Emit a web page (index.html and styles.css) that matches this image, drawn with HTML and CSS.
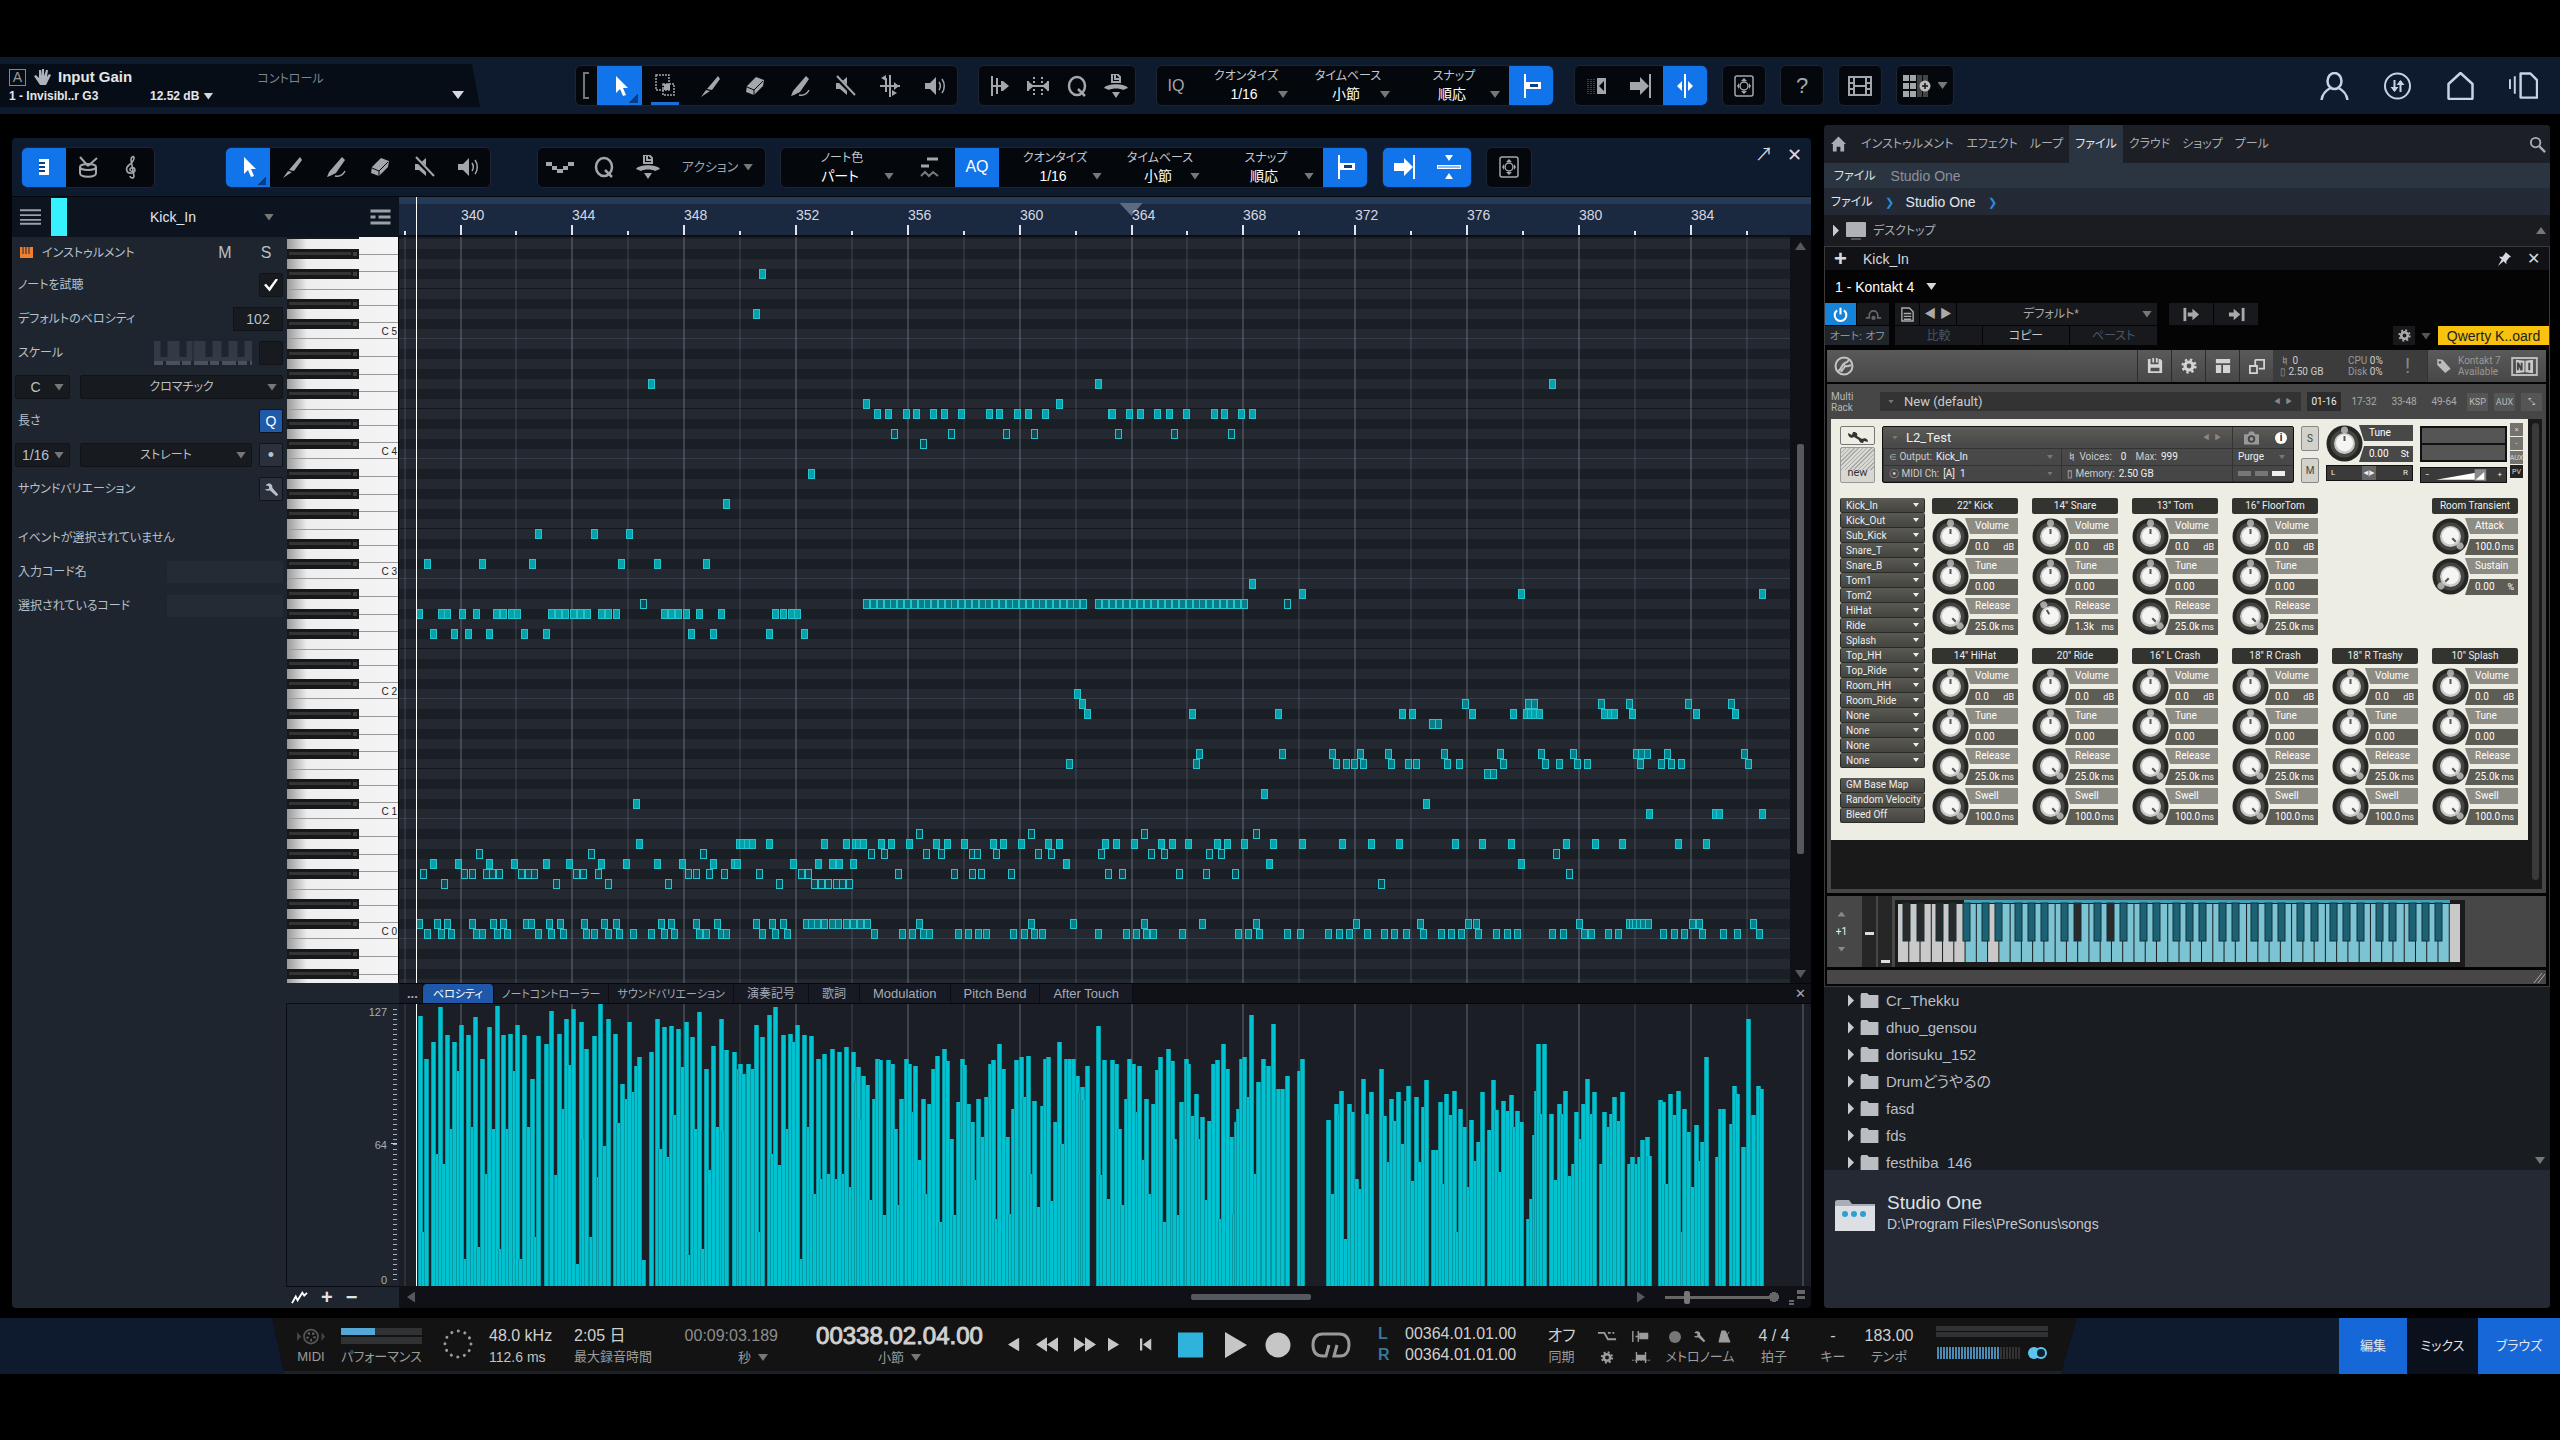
FILE: index.html
```html
<!DOCTYPE html>
<html lang="ja">
<head>
<meta charset="utf-8">
<title>Studio One</title>
<link rel="stylesheet" href="styles.css">
</head>
<body>
<svg class="sprite" aria-hidden="true">
  <symbol id="arrow" viewBox="0 0 24 24"><path d="M8 2v17l4-4 3 7 3-1-3-7h5z" fill="#fff"/></symbol>
  <symbol id="range" viewBox="0 0 24 24"><path d="M3 1h13v15H3z" fill="none" stroke="currentColor" stroke-width="1.5" stroke-dasharray="2 1"/><path d="M10 10h11v11H10z" fill="none" stroke="currentColor" stroke-width="1.5" stroke-dasharray="2 1"/><path d="M11 10h6v6h-6z" fill="currentColor"/></symbol>
  <symbol id="pencil" viewBox="0 0 24 24"><path d="M20 2l2 3-8 11-5-1zM8 16l4 1-9 6z" fill="currentColor"/></symbol>
  <symbol id="eraser" viewBox="0 0 24 24"><path d="M13 3l8 3-1 6-9 9-8-3 1-6z" fill="currentColor"/><path d="M4 13l7 3 9-9M11 16v5" stroke="#05080d" fill="none"/></symbol>
  <symbol id="brush" viewBox="0 0 24 24"><path d="M18 2l3 3-9 13-6 3-3 1 2-5z" fill="currentColor"/><path d="M11 21c5 1 8-1 10-5" stroke="currentColor" stroke-width="1.5" fill="none"/></symbol>
  <symbol id="mute" viewBox="0 0 24 24"><path d="M3 9h4l7-6v18l-7-6H3z" fill="currentColor"/><path d="M3 3l18 18" stroke="#05080d" stroke-width="4"/><path d="M4 2l18 19" stroke="currentColor" stroke-width="2"/></symbol>
  <symbol id="sound" viewBox="0 0 24 24"><path d="M2 9h5l6-6v18l-6-6H2z" fill="currentColor"/><path d="M16 8c2 3 2 5 0 8M19 5c3 4 3 10 0 14" stroke="currentColor" stroke-width="1.5" fill="none"/></symbol>
  <symbol id="bend" viewBox="0 0 24 24"><path d="M12 1v22M2 12h20M8 4v14" stroke="currentColor" stroke-width="2"/><path d="M8 1v6L3 4zM14 22v-6l5 3zM16 8l5 4-5 4z" fill="currentColor"/></symbol>
  <symbol id="trans" viewBox="0 0 24 24"><path d="M5 2v20M10 4v16M15 7v10M5 12h12" stroke="currentColor" stroke-width="2"/><path d="M16 7l6 5-6 5z" fill="currentColor"/></symbol>
  <symbol id="stretch" viewBox="0 0 24 24"><path d="M2 7v10M22 7v10M2 12h20" stroke="currentColor" stroke-width="2"/><path d="M8 3v18M16 3v18" stroke="currentColor" stroke-width="2" stroke-dasharray="2 2"/><path d="M3 8l5 4-5 4zM21 8l-5 4 5 4z" fill="currentColor"/></symbol>
  <symbol id="quant" viewBox="0 0 24 24"><ellipse cx="12" cy="12" rx="8" ry="9" fill="none" stroke="currentColor" stroke-width="2.5"/><path d="M13 15l7 7" stroke="currentColor" stroke-width="2.5"/></symbol>
  <symbol id="midiq" viewBox="0 0 24 24"><path d="M8 0h5l3 3v5H8zM11 0v5h4" fill="none" stroke="currentColor" stroke-width="2"/><path d="M0 14c3-5 21-5 24 0l-5 2c-3-2-11-2-14 0zM8 18h8l-4 6z" fill="currentColor"/></symbol>
  <symbol id="snap" viewBox="0 0 24 24"><path d="M6 0v24" stroke="#fff" stroke-width="2"/><path d="M7 8h15v7H7z" fill="#fff"/><path d="M11 10h8v3h-8z" fill="#0c3f8a"/></symbol>
  <symbol id="dots" viewBox="0 0 24 24"><path d="M3 5v15M6 5v15M9 5v15" stroke="#777" stroke-dasharray="1 1"/><path d="M12 4h9v16h-9zM19 7l-5 5 5 5z" fill="currentColor" fill-rule="evenodd"/></symbol>
  <symbol id="toend" viewBox="0 0 24 24"><path d="M1 8h10V3l9 9-9 9v-5H1z" fill="currentColor"/><path d="M21 0v24" stroke="currentColor" stroke-width="2"/></symbol>
  <symbol id="center" viewBox="0 0 24 24"><path d="M12 0v24" stroke="#fff" stroke-width="2"/><path d="M9 7v10l-5-5zM15 7v10l5-5z" fill="#fff"/></symbol>
  <symbol id="split" viewBox="0 0 24 24"><path d="M0 12h24" stroke="#fff" stroke-width="4"/><path d="M1 12h22" stroke="#1174ea"/><path d="M8 0h8l-4 6zM8 24h8l-4-6z" fill="#fff"/></symbol>
  <symbol id="focus" viewBox="0 0 24 24"><rect x="3" y="2" width="18" height="20" rx="2" fill="none" stroke="currentColor" stroke-width="1.5"/><circle cx="12" cy="12" r="4" fill="none" stroke="currentColor" stroke-width="1.5"/><path d="M9 7l3-3 3 3zM9 17l3 3 3-3zM7 9l-2 3 2 3zM17 9l2 3-2 3z" fill="currentColor"/></symbol>
  <symbol id="film" viewBox="0 0 24 24"><path d="M1 3h22v18H1zM6 3v18M18 3v18M6 12h12M1 9h5M1 15h5M18 9h5M18 15h5" fill="none" stroke="currentColor" stroke-width="2"/></symbol>
  <symbol id="gridplus" viewBox="0 0 28 24"><path d="M0 1h6v6H0zM7 1h6v6H7zM0 9h6v6H0zM7 9h6v6H7zM0 17h6v6H0zM7 17h6v6H7z" fill="currentColor"/><path d="M14 1h5v22h-5zM20 1h5v22h-5z" fill="#444"/><circle cx="22" cy="12" r="5.5" fill="#bbb"/><path d="M22 9v6M19 12h6" stroke="#111" stroke-width="1.5"/></symbol>
  <symbol id="user" viewBox="0 0 28 28"><ellipse cx="14" cy="9" rx="7" ry="8" fill="none" stroke="currentColor" stroke-width="2.5"/><path d="M1 28c1-7 5-10 9-12M27 28c-1-7-5-10-9-12" fill="none" stroke="currentColor" stroke-width="2.5"/></symbol>
  <symbol id="sync" viewBox="0 0 28 28"><circle cx="14" cy="14" r="12.5" fill="none" stroke="currentColor" stroke-width="2"/><path d="M11 8v11M17 20V9" stroke="currentColor" stroke-width="2"/><path d="M7 15h8l-4 5zM13 13h8l-4-5z" fill="currentColor"/></symbol>
  <symbol id="house" viewBox="0 0 28 28"><path d="M2 12L14 1l12 11v14q0 1-1 1H3q-1 0-1-1z" fill="none" stroke="currentColor" stroke-width="2.5" stroke-linejoin="round"/></symbol>
  <symbol id="pages" viewBox="0 0 30 28"><path d="M12 1h10l7 7v18H12z" fill="none" stroke="currentColor" stroke-width="2.5" stroke-linejoin="round"/><path d="M1 7v10M6 4v18" stroke="currentColor" stroke-width="2"/></symbol>
  <symbol id="hand" viewBox="0 0 18 18"><path d="M1 8l2-1 3 3V2h2v6l1-7h2v7l2-6h2l-1 7 2-3 2 1-5 10H7z" fill="#aeb4bb"/></symbol>
  <symbol id="keys" viewBox="0 0 24 24"><path d="M7 4h10v16H7z" fill="#fff"/><path d="M7 8h6M7 12h6M7 16h6" stroke="#0b3f87" stroke-width="2"/></symbol>
  <symbol id="drum" viewBox="0 0 24 24"><ellipse cx="12" cy="12" rx="8" ry="3" fill="none" stroke="currentColor" stroke-width="2"/><path d="M4 12v6c0 5 16 5 16 0v-6M4 2l8 9M21 3l-9 8" fill="none" stroke="currentColor" stroke-width="2"/></symbol>
  <symbol id="clef" viewBox="0 0 24 24"><path d="M13 16c-3 1-4-2-2-3 4-2 6 4 1 5-6 1-7-5-3-8 4-3 5-5 5-7 0-3-3-1-3 2l3 16c0 3-4 2-4 0" fill="none" stroke="currentColor" stroke-width="1.6"/></symbol>
  <symbol id="steps" viewBox="0 0 28 24"><path d="M0 7h6v4H0zM6 11h5v4H6zM11 14h6v4h-6zM17 11h5v4h-5zM22 7h6v4h-6z" fill="currentColor"/></symbol>
  <symbol id="notefx" viewBox="0 0 24 24"><path d="M10 4h11M4 11h8" stroke="currentColor" stroke-width="3"/><path d="M4 21l4-4 4 4 4-4 5 4" fill="none" stroke="#777" stroke-width="2"/></symbol>
  <symbol id="wrench" viewBox="0 0 18 18"><path d="M2 4c3-4 9-2 8 3l7 8-2 2-8-7c-2 1-5 0-6-1l5-1V5z" fill="currentColor"/></symbol>
  <symbol id="gear" viewBox="0 0 20 20"><circle cx="10" cy="10" r="5" fill="none" stroke="currentColor" stroke-width="4"/><circle cx="10" cy="10" r="8" fill="none" stroke="currentColor" stroke-width="3" stroke-dasharray="3 3.3"/></symbol>
  <symbol id="search" viewBox="0 0 18 18"><circle cx="7" cy="7" r="5" fill="none" stroke="currentColor" stroke-width="2"/><path d="M11 11l6 6" stroke="currentColor" stroke-width="2.5"/></symbol>
  <symbol id="homef" viewBox="0 0 16 16"><path d="M8 0l8 8h-2v8h-4v-5H6v5H2V8H0z" fill="currentColor"/></symbol>
  <symbol id="screen" viewBox="0 0 22 20"><rect x="1" y="1" width="20" height="15" rx="1" fill="#aeb2b6"/><path d="M6 18h10" stroke="#555" stroke-width="2"/></symbol>
  <symbol id="folder" viewBox="0 0 19 16"><path d="M0 2l1-2h6l2 2h10v14H0z" fill="#babdc2"/></symbol>
  <symbol id="pin" viewBox="0 0 16 16"><path d="M9 1l6 5-2 1-3 4v3l-3-3-6 5 4-7-3-3h4l3-4z" fill="currentColor"/></symbol>
  <symbol id="power" viewBox="0 0 18 18"><path d="M5 4a7 7 0 1 0 8 0M9 1v8" fill="none" stroke="#fff" stroke-width="2.5"/></symbol>
  <symbol id="bypass" viewBox="0 0 20 16"><path d="M1 12h4V9c0-7 10-7 10 0v3h4" fill="none" stroke="currentColor" stroke-width="2"/><circle cx="10" cy="12" r="2.5" fill="currentColor"/></symbol>
  <symbol id="doc" viewBox="0 0 14 16"><path d="M1 1h8l4 4v10H1zM3 7h8M3 10h8M3 13h8" fill="none" stroke="currentColor" stroke-width="1.5"/></symbol>
  <symbol id="inarr" viewBox="0 0 18 14"><path d="M2 0v14" stroke="currentColor" stroke-width="3"/><path d="M5 5h5V1l7 6-7 6V9H5z" fill="currentColor"/></symbol>
  <symbol id="outarr" viewBox="0 0 18 14"><path d="M16 0v14" stroke="currentColor" stroke-width="3"/><path d="M1 5h5V1l7 6-7 6V9H1z" fill="currentColor"/></symbol>
  <symbol id="klogo" viewBox="0 0 20 20"><circle cx="10" cy="10" r="8.5" fill="none" stroke="currentColor" stroke-width="2"/><path d="M4 15c3 0 3-6 7-8 3-1 3-2 4-3M7 16c2-4 3-3 4-6 2 1 4 0 6-1" stroke="currentColor" stroke-width="2" fill="none"/></symbol>
  <symbol id="disk" viewBox="0 0 18 18"><path d="M1 1h3v6h9V1h2l2 2v14H1zM6 0h2v5H6zM10 0h2v5h-2zM4 11v4h10v-4z" fill="currentColor" fill-rule="evenodd"/></symbol>
  <symbol id="panes" viewBox="0 0 18 18"><path d="M1 1h16v5H1zM1 8h6v9H1zM9 8h8v9H9z" fill="currentColor"/></symbol>
  <symbol id="popout" viewBox="0 0 18 18"><path d="M7 2h10v10h-6M1 9h8v8H1zM7 2v6" fill="none" stroke="currentColor" stroke-width="2"/></symbol>
  <symbol id="tag" viewBox="0 0 16 18"><path d="M1 1l6 1 9 10-6 5L1 8z" fill="currentColor"/><circle cx="4" cy="5" r="1.5" fill="#555"/></symbol>
  <symbol id="ni" viewBox="0 0 28 20"><path d="M1 1h26v18H1z" fill="none" stroke="#bbb" stroke-width="2"/><path d="M5 3l9 1v12l-9 1zM15 4l8-1v14l-8-1z" fill="#c9c9c9"/><path d="M7 14V6l4 8V6M19 6v8" stroke="#444" stroke-width="2" fill="none"/></symbol>
  <symbol id="camera" viewBox="0 0 16 14"><path d="M0 3h4l2-3h4l2 3h4v11H0z" fill="#999"/><circle cx="8" cy="8" r="3" fill="none" stroke="#444" stroke-width="2"/></symbol>
  <symbol id="spanner" viewBox="0 0 24 14"><path d="M2 4l4 2 1-3c4 0 5 2 4 4l5 3c3-2 6 0 6 3l-4-1-1 2c-3 0-4-2-4-3L8 8c-3 2-6 0-6-4z" fill="#333"/></symbol>
  <symbol id="midi" viewBox="0 0 34 24"><circle cx="17" cy="12" r="8" fill="none" stroke="#555" stroke-width="2"/><circle cx="17" cy="12" r="4" fill="none" stroke="#666" stroke-width="3" stroke-dasharray="2 3"/><path d="M1 7l5 5-5 5zM29 7l4 5-4 5z" fill="#444"/></symbol>
  <symbol id="ring" viewBox="0 0 30 30"><circle cx="15" cy="15" r="13" fill="none" stroke="#9a9a9a" stroke-width="3" stroke-linecap="round" stroke-dasharray="0.1 6.7"/></symbol>
  <symbol id="loop" viewBox="0 0 40 26"><path d="M18 13l-3 11h-3C4 24 2 19 2 13 2 5 6 2 12 2h16c7 0 10 4 10 11 0 6-3 11-9 11h-6l3-11" fill="none" stroke="#999" stroke-width="3"/></symbol>
  <symbol id="metro" viewBox="0 0 14 14"><path d="M4 1h4l5 12H1zM5 12l7-10" fill="currentColor" stroke="currentColor"/></symbol>
  <symbol id="pre" viewBox="0 0 22 14"><path d="M1 3h7l4 7h9M12 3h3M17 3h2" fill="none" stroke="currentColor" stroke-width="2"/></symbol>
  <symbol id="punch" viewBox="0 0 22 14"><path d="M2 1v12M5 7h4M8 1v12" stroke="currentColor" stroke-width="1.5"/><path d="M9 3h10v7H9z" fill="currentColor"/></symbol>
  <symbol id="punch2" viewBox="0 0 22 14"><path d="M1 10h20" stroke="currentColor" stroke-dasharray="2 1"/><path d="M6 1v12M16 1v12" stroke="currentColor" stroke-width="1.5"/><path d="M6 4h10v6H6z" fill="currentColor"/></symbol>
  <symbol id="curve" viewBox="0 0 18 16"><path d="M1 14l4-7 2 4 5-8 2 3 3-3" fill="none" stroke="#fff" stroke-width="2"/></symbol>
</svg>

<header class="topbar">
  <div class="console">
    <div class="param">
      <div class="param-name"><b class="auto">A</b><svg class="i18"><use href="#hand"/></svg><strong>Input Gain</strong></div>
      <div class="param-val"><strong>1 - Invisibl..r G3</strong><strong>12.52 dB</strong><i class="tri lt"></i></div>
    </div>
    <span class="console-title">コントロール</span>
    <i class="tri lt"></i>
  </div>
  <div class="group g-tools">
    <span class="bracket"></span>
    <button class="tb on corner"><svg><use href="#arrow"/></svg></button>
    <button class="tb under"><svg><use href="#range"/></svg></button>
    <button class="tb"><svg><use href="#pencil"/></svg></button>
    <button class="tb"><svg><use href="#eraser"/></svg></button>
    <button class="tb"><svg><use href="#brush"/></svg></button>
    <button class="tb"><svg><use href="#mute"/></svg></button>
    <button class="tb"><svg><use href="#bend"/></svg></button>
    <button class="tb"><svg><use href="#sound"/></svg></button>
  </div>
  <div class="group narrow">
    <button class="tb"><svg><use href="#trans"/></svg></button>
    <button class="tb"><svg><use href="#stretch"/></svg></button>
    <button class="tb"><svg><use href="#quant"/></svg></button>
    <button class="tb"><svg><use href="#midiq"/></svg></button>
  </div>
  <div class="group">
    <button class="tb word iq">IQ</button>
    <label class="opt">クオンタイズ<span class="pick"><select><option>1/16</option></select></span></label>
    <label class="opt">タイムベース<span class="pick"><select><option>小節</option></select></span></label>
    <label class="opt last">スナップ<span class="pick"><select><option>順応</option></select></span></label>
    <button class="tb on"><svg><use href="#snap"/></svg></button>
  </div>
  <div class="group near">
    <button class="tb"><svg><use href="#dots"/></svg></button>
    <button class="tb"><svg><use href="#toend"/></svg></button>
    <button class="tb on"><svg><use href="#center"/></svg></button>
  </div>
  <div class="singles">
    <div class="group"><button class="tb"><svg><use href="#focus"/></svg></button></div>
    <div class="group"><button class="tb word big">?</button></div>
    <div class="group"><button class="tb"><svg><use href="#film"/></svg></button></div>
    <div class="group"><button class="tb wide"><svg class="w28"><use href="#gridplus"/></svg><i class="tri"></i></button></div>
  </div>
  <nav class="account">
    <button><svg><use href="#user"/></svg></button>
    <button><svg><use href="#sync"/></svg></button>
    <button><svg><use href="#house"/></svg></button>
    <button><svg><use href="#pages"/></svg></button>
  </nav>
</header>

<main class="work">
  <section class="editor">
    <div class="toolbar">
      <div class="group">
        <button class="tb on"><svg><use href="#keys"/></svg></button>
        <button class="tb"><svg><use href="#drum"/></svg></button>
        <button class="tb"><svg><use href="#clef"/></svg></button>
      </div>
      <div class="group far">
        <button class="tb on corner"><svg><use href="#arrow"/></svg></button>
        <button class="tb"><svg><use href="#pencil"/></svg></button>
        <button class="tb"><svg><use href="#brush"/></svg></button>
        <button class="tb"><svg><use href="#eraser"/></svg></button>
        <button class="tb"><svg><use href="#mute"/></svg></button>
        <button class="tb"><svg><use href="#sound"/></svg></button>
      </div>
      <div class="group mid">
        <button class="tb"><svg class="w28"><use href="#steps"/></svg></button>
        <button class="tb"><svg><use href="#quant"/></svg></button>
        <button class="tb"><svg><use href="#midiq"/></svg></button>
        <button class="tb action">アクション<i class="tri"></i></button>
      </div>
      <div class="group wideopts">
        <label class="opt color">ノート色<span class="pick"><select><option>パート</option></select></span></label>
        <button class="tb fx"><svg><use href="#notefx"/></svg></button>
        <button class="tb word on">AQ</button>
        <label class="opt first">クオンタイズ<span class="pick"><select><option>1/16</option></select></span></label>
        <label class="opt">タイムベース<span class="pick"><select><option>小節</option></select></span></label>
        <label class="opt last">スナップ<span class="pick"><select><option>順応</option></select></span></label>
        <button class="tb on"><svg><use href="#snap"/></svg></button>
      </div>
      <div class="group">
        <button class="tb on"><svg><use href="#toend"/></svg></button>
        <button class="tb on"><svg><use href="#split"/></svg></button>
      </div>
      <div class="group"><button class="tb"><svg><use href="#focus"/></svg></button></div>
      <div class="winbtns"><button>↗</button><button>✕</button></div>
    </div>

    <div class="trackrow">
      <div class="trackhead">
        <svg class="menu" viewBox="0 0 22 16"><path d="M0 1h22M0 6h22M0 11h22M0 15h22" stroke="#9aa0a6" stroke-width="2"/></svg>
        <i class="swatch"></i>
        <span class="pick track"><select aria-label="トラック"><option>Kick_In</option></select></span>
        <svg class="menu" viewBox="0 0 20 16"><path d="M0 2h20M0 14h20M0 8h5M8 8h12" stroke="#9aa0a6" stroke-width="3"/></svg>
      </div>
      <svg class="ruler" id="ruler"></svg>
    </div>

    <div class="noterow">
      <form class="inspector">
        <div class="row first"><svg class="inst" viewBox="0 0 13 11"><path d="M0 0h13v11H0z" fill="#f08030"/><path d="M3 0v7M6 0v7M9 0v7" stroke="#1e2530"/></svg><span class="grow">インストゥルメント</span><button type="button" class="ms">M</button><button type="button" class="ms">S</button></div>
        <div class="row"><label class="grow" for="prev">ノートを試聴</label><input id="prev" type="checkbox" class="tick" checked></div>
        <div class="row"><label class="grow" for="vel">デフォルトのベロシティ</label><input id="vel" class="num" value="102"></div>
        <div class="row"><label class="grow" for="scale">スケール</label><svg class="mini" viewBox="0 0 98 24"><path d="M0 0h98v20H0z" fill="#333a45"/><path d="M10 0v16M29 0v16M55 0v16M71 0v16M87 0v16" stroke="#1e2530" stroke-width="7"/><path d="M39 0v24" stroke="#1e2530"/><path d="M0 22h98" stroke="#4b515b" stroke-width="4" stroke-dasharray="9 3 14 2"/></svg><input id="scale" type="checkbox" class="tick"></div>
        <div class="row"><span class="pick box key"><select aria-label="キー"><option>C</option></select></span><span class="pick box grow"><select aria-label="スケール種類"><option>クロマチック</option></select></span></div>
        <div class="row"><span class="grow">長さ</span><button type="button" class="sq blue">Q</button></div>
        <div class="row"><span class="pick box key"><select aria-label="音価"><option>1/16</option></select></span><span class="pick box grow"><select aria-label="リズム"><option>ストレート</option></select></span><button type="button" class="sq">•</button></div>
        <div class="row"><span class="grow">サウンドバリエーション</span><button type="button" class="sq"><svg><use href="#wrench"/></svg></button></div>
        <div class="row gap">イベントが選択されていません</div>
        <div class="row"><label class="grow" for="ic">入力コード名</label><input id="ic" class="chord"></div>
        <div class="row"><label class="grow" for="sc">選択されているコード</label><input id="sc" class="chord"></div>
      </form>
      <svg class="piano" id="piano"></svg>
      <svg class="notes" id="notes"></svg>
      <div class="vscroll"><i class="up"></i><b></b><i class="down"></i></div>
    </div>

    <div class="lanerow">
      <div class="lane-left">
        <div class="lane-gap"></div>
        <svg class="lane-scale" id="lanescale"></svg>
        <div class="lane-tools"><svg><use href="#curve"/></svg><b>+</b><b>−</b></div>
      </div>
      <div class="lane">
        <div class="tabs">
          <button class="dots">...</button><button class="kana sel">ベロシティ</button><button class="kana">ノートコントローラー</button><button class="kana">サウンドバリエーション</button><button class="kanji">演奏記号</button><button class="kanji">歌詞</button><button>Modulation</button><button>Pitch Bend</button><button>After Touch</button>
          <button class="x">✕</button>
        </div>
        <svg class="vel" id="velocity"></svg>
        <div class="hscroll"><i class="left"></i><span class="track-h"><b></b></span><i class="right"></i><input type="range" aria-label="ズーム" value="18"><svg viewBox="0 0 16 16"><path d="M8 1h8v4H8zM8 7h8v3H8zM0 11h5v2H0zM0 14h5v2H0z" fill="#666"/></svg></div>
      </div>
    </div>
  </section>

  <aside class="browser">
    <nav class="btabs"><a href="#home"><svg><use href="#homef"/></svg></a><a href="#inst">インストゥルメント</a><a href="#fx">エフェクト</a><a href="#loops">ループ</a><a href="#files" class="cur">ファイル</a><a href="#cloud">クラウド</a><a href="#shop">ショップ</a><a href="#pool">プール</a><button><svg><use href="#search"/></svg></button></nav>
    <div class="subtabs"><span>ファイル</span><span class="dim">Studio One</span></div>
    <div class="crumbs"><a href="#f">ファイル</a><i>❯</i><a href="#s">Studio One</a><i>❯</i></div>
    <div class="desk"><i class="tr"></i><svg><use href="#screen"/></svg>デスクトップ<i class="tri upt"></i></div>

    <section class="plugin">
      <div class="ptitle"><b>+</b><span class="grow">Kick_In</span><svg><use href="#pin"/></svg><button>✕</button></div>
      <div class="pname">1 - Kontakt 4 <i class="tri lt"></i></div>
      <div class="pbar">
        <button class="pw"><svg><use href="#power"/></svg></button><button class="by"><svg><use href="#bypass"/></svg></button>
        <button class="c1"><svg><use href="#doc"/></svg></button><button class="c2">◀ ▶</button>
        <span class="pick preset"><select aria-label="プリセット"><option>デフォルト*</option></select></span>
        <button class="c3"><svg><use href="#inarr"/></svg></button><button class="c3 n"><svg><use href="#outarr"/></svg></button>
      </div>
      <div class="pbar two">
        <button class="au">オート: オフ</button><button class="cmp">比較</button><button class="copy">コピー</button><button class="cmp">ペースト</button>
        <button class="gr"><svg><use href="#gear"/></svg></button><i class="tri"></i><button class="qw">Qwerty K..oard</button>
      </div>

      <div class="khead">
        <svg class="logo"><use href="#klogo"/></svg>
        <button><svg><use href="#disk"/></svg></button><button><svg><use href="#gear"/></svg></button><button><svg><use href="#panes"/></svg></button><button><svg><use href="#popout"/></svg></button>
        <div class="stats"><span>♮ <em>0</em></span><span>CPU <em>0%</em></span><span>▯ <em>2.50 GB</em></span><span>Disk <em>0%</em></span></div>
        <div class="bang">!</div>
        <div class="avail"><svg class="tg"><use href="#tag"/></svg><span>Kontakt 7<br>Available</span><svg class="nil"><use href="#ni"/></svg></div>
      </div>

      <div class="rack">
        <div class="multi"><span class="mr">Multi<br>Rack</span><div class="mname"><i class="tri"></i><span class="grow">New (default)</span><span class="nav">◀&nbsp;&nbsp;▶</span></div>
          <button class="pg cur">01-16</button><button class="pg">17-32</button><button class="pg">33-48</button><button class="pg">49-64</button><button class="kb">KSP</button><button class="kb">AUX</button><button class="kb">⤡</button></div>
        <div class="rackbody">
          <div class="instrument">
            <div class="ihead">
              <div class="ileft"><button class="wr"><svg><use href="#spanner"/></svg></button><button class="new">new</button></div>
              <div class="ibox">
                <div class="iname"><i class="tri"></i><span class="grow">L2_Test</span><span class="nav">◀&nbsp;&nbsp;▶</span></div>
                <div class="icam"><svg><use href="#camera"/></svg><b>i</b></div>
                <div class="ic"><em>∈ Output:</em> Kick_In<i class="tri"></i></div><div class="ic"><em>♮ Voices:</em>&nbsp; 0 &nbsp;<em>Max:</em> 999</div><div class="ip">Purge<i class="tri"></i></div>
                <div class="ic"><em>☉ MIDI Ch:</em> [A]&nbsp; 1<i class="tri"></i></div><div class="ic"><em>▯ Memory:</em> 2.50 GB</div><div class="ip leds"><u></u><u></u><u class="hi"></u></div>
              </div>
              <div class="ism"><button>S</button><button>M</button></div>
              <div class="itune"><div class="cell dark" id="tune"></div><div class="pan"><span>L</span><b>◂|▸</b><span>R</span></div></div>
              <div class="imeter"><div class="meter"><i></i><i></i></div><div class="pan vol"><span>−</span><svg viewBox="0 0 58 12"><path d="M0 11L50 2v9z" fill="#fff"/><path d="M40 0h12v12H40z" fill="#888"/><path d="M41 11l9-8v8z" fill="#fff"/></svg><span>+</span></div></div>
              <div class="iside"><button>×</button><button>-</button><button>AUX</button><button class="pv">PV</button></div>
            </div>
            <div class="ibody">
              <div class="routes"><div id="routes"></div><div class="opts"><button>GM Base Map</button><button>Random Velocity</button><button>Bleed Off</button></div></div>
              <div class="strips" id="strips"></div>
            </div>
          </div>
          <div class="rscroll"></div>
        </div>
      </div>

      <div class="kkeys"><div class="oct"><i></i>+1<i class="dn"></i></div><div class="whl"><b class="m"></b></div><div class="whl"><b></b></div><svg id="minikeys"></svg></div>
      <div class="kfoot"><svg viewBox="0 0 12 10"><path d="M1 10L9 0M5 10l7-9" stroke="#aaa"/></svg></div>
    </section>

    <div class="listwrap">
      <ul class="folders">
        <li><i class="tr"></i><svg><use href="#folder"/></svg>Cr_Thekku</li>
        <li><i class="tr"></i><svg><use href="#folder"/></svg>dhuo_gensou</li>
        <li><i class="tr"></i><svg><use href="#folder"/></svg>dorisuku_152</li>
        <li><i class="tr"></i><svg><use href="#folder"/></svg>Drumどうやるの</li>
        <li><i class="tr"></i><svg><use href="#folder"/></svg>fasd</li>
        <li><i class="tr"></i><svg><use href="#folder"/></svg>fds</li>
        <li><i class="tr"></i><svg><use href="#folder"/></svg>festhiba_146</li>
      </ul>
      <i class="tri"></i>
    </div>
    <footer class="info">
      <svg viewBox="0 0 40 31"><path d="M0 2q0-2 3-2h11l3 4h23v27H0z" fill="#a9adb8"/><path d="M0 6h40v25H0z" fill="#dcdfe4"/><circle cx="10" cy="14" r="3" fill="#2f9fd0"/><circle cx="19" cy="14" r="3" fill="#2f9fd0"/><circle cx="28" cy="14" r="3" fill="#2f9fd0"/></svg>
      <div><div class="ititle">Studio One</div><div class="ipath">D:\Program Files\PreSonus\songs</div></div>
    </footer>
  </aside>
</main>

<footer class="transport">
  <div class="deck">
    <div class="col c-midi"><svg class="midi"><use href="#midi"/></svg><span>MIDI</span></div>
    <div class="col c-perf"><div class="bars"><i><b></b></i><i></i></div><span>パフォーマンス</span></div>
    <div class="col c-ring"><svg class="i30"><use href="#ring"/></svg></div>
    <div class="col l c-khz"><span class="v">48.0 kHz</span><span class="s">112.6 ms</span></div>
    <div class="col l c-rec"><span class="v">2:05 日</span><span>最大録音時間</span></div>
    <div class="col r c-time"><span class="v dim">00:09:03.189</span><span class="unit">秒<i class="tri"></i></span></div>
    <div class="col c-pos"><span class="pos">00338.02.04.00</span><span class="unit">小節<i class="tri"></i></span></div>
    <div class="buttons">
      <button><svg viewBox="0 0 14 16"><path d="M13 0v16L0 8z"/></svg></button>
      <button class="b2"><svg viewBox="0 0 24 16"><path d="M12 0v16L0 8zM24 0v16L12 8z"/></svg></button>
      <button class="b2"><svg viewBox="0 0 24 16"><path d="M0 0v16l12-8zM12 0v16l12-8z"/></svg></button>
      <button class="b0"><svg viewBox="0 0 14 16"><path d="M0 0v16l13-8z"/></svg></button>
      <button class="b1"><svg viewBox="0 0 16 16"><path d="M0 0h3v16H0zM15 0v16L4 8z"/></svg></button>
      <button class="bs"><svg viewBox="0 0 26 26"><path fill="#2fb2dc" d="M0 0h26v26H0z"/></svg></button>
      <button class="bp"><svg viewBox="0 0 22 26"><path d="M0 0v26l22-13z"/></svg></button>
      <button class="br"><svg viewBox="0 0 26 26"><circle cx="13" cy="13" r="12.5"/></svg></button>
      <button class="bl"><svg><use href="#loop"/></svg></button>
    </div>
    <div class="col lr"><b>L</b><b>R</b></div>
    <div class="col l c-loc"><span class="v">00364.01.01.00</span><span class="v">00364.01.01.00</span></div>
    <div class="col c-off"><span class="v">オフ</span><span>同期</span></div>
    <div class="col c-ic"><div><svg><use href="#pre"/></svg><svg><use href="#punch"/></svg></div><div><svg><use href="#gear"/></svg><svg><use href="#punch2"/></svg></div></div>
    <div class="col c-met"><div><i class="rdot"></i><svg><use href="#wrench"/></svg><svg><use href="#metro"/></svg></div><span>メトロノーム</span></div>
    <div class="col c-sig"><span class="v">4 / 4</span><span>拍子</span></div>
    <div class="col c-key"><span class="v">-</span><span>キー</span></div>
    <div class="col c-bpm"><span class="v">183.00</span><span>テンポ</span></div>
    <div class="col c-out"><div class="om"></div><div class="of"><i></i><svg viewBox="0 0 20 12"><circle cx="6" cy="6" r="6" fill="#5cc4ee"/><circle cx="13" cy="6" r="5" fill="#10202c" stroke="#5cc4ee" stroke-width="2"/></svg></div></div>
  </div>
  <nav class="views"><button class="on">編集</button><button>ミックス</button><button class="on">ブラウズ</button></nav>
</footer>
<script src="app.js"></script>
</body>
</html>
```
FILE: styles.css
```css
* { box-sizing: border-box; }
body {
  margin: 0; padding: 57px 0 65px; min-height: 100vh; background: #000; color: #c3c8cf;
  font-family: "Liberation Sans", "Noto Sans CJK JP", sans-serif; font-size: 12px;
  font-feature-settings: "palt"; display: flex; flex-direction: column; line-height: 16px;
}
button, input, select { font: inherit; font-feature-settings: inherit; color: inherit; border: 0; background: none; padding: 0; margin: 0; }
button { cursor: pointer; display: flex; align-items: center; justify-content: center; white-space: nowrap; }
a { color: inherit; text-decoration: none; }
i, em, u { font-style: normal; text-decoration: none; }
.sprite { display: none; }
svg { display: block; flex: none; }
.grow { flex: 1; min-width: 0; }
.i18 { width: 18px; height: 18px; }
.i30 { width: 30px; height: 30px; }
.tri { width: 10px; height: 7px; background: #777; clip-path: polygon(0 0, 100% 0, 50% 100%); flex: none; }
.tri.lt { background: #d5d8dc; }
.tr { width: 6px; height: 12px; background: #c8cbd0; clip-path: polygon(0 0, 100% 50%, 0 100%); flex: none; }

.pick { display: grid; align-items: center; min-width: 0; }
.pick select { grid-area: 1 / 1; appearance: none; width: 100%; text-align: center; text-align-last: center; outline: 0; }
.pick::after { content: ""; grid-area: 1 / 1; justify-self: end; width: 10px; height: 7px; margin-right: 5px; background: #777; clip-path: polygon(0 0, 100% 0, 50% 100%); pointer-events: none; }

/* Top bar */
.topbar { display: flex; align-items: center; height: 57px; background: #0e1a2e; }
.console { width: 480px; height: 43px; display: flex; justify-content: space-between; background: #060d16; clip-path: polygon(0 0, 472px 0, 100% 100%, 0 100%); padding: 0 16px 0 9px; margin-right: 95px; color: #e3e6ea; }
.console > .tri { align-self: flex-end; width: 12px; height: 8px; margin-bottom: 8px; }
.console-title { padding-top: 7px; margin-right: 100px; color: #7d848e; }
.param { display: flex; flex-direction: column; width: 220px; padding-top: 2px; }
.param-name { display: flex; align-items: center; gap: 7px; height: 22px; font-size: 15px; }
.auto { border: 1px solid #888; width: 17px; height: 17px; font-size: 14px; line-height: 15px; text-align: center; color: #999; font-weight: 400; }
.param-val { display: flex; align-items: center; gap: 4px; }
.param-val strong:first-child { width: 137px; }
.group { display: flex; height: 41px; background: #04070c; border: 1px solid #1e252f; border-radius: 6px; overflow: hidden; margin-right: 20px; flex: none; }
.group.near { margin-right: 14px; }
.tb { width: 44px; height: 39px; color: #a3a6aa; flex: none; }
.tb svg { width: 24px; height: 24px; }
.tb svg.w28 { width: 28px; }
.tb.on { background: #1174ea; color: #fff; }
.tb.corner { background: linear-gradient(135deg, transparent 50%, #0a3c80 50%) right 4px bottom 2px / 9px 9px no-repeat #1174ea; }
.tb.under { background: linear-gradient(#1c6fd4, #1c6fd4) bottom / 28px 3px no-repeat; }
.tb.word { font-size: 16px; }
.tb.iq { width: 38px; }
.tb.big { font-size: 22px; }
.g-tools .tb { width: 45px; }
.narrow .tb { width: 39px; }
.bracket { width: 6px; height: 27px; margin: 6px 8px 0 7px; border: 2px solid #777; border-right: 0; }
.opt { width: 102px; text-align: center; padding-top: 2px; line-height: 17px; display: flex; flex-direction: column; }
.opt .pick select { font-size: 14px; height: 19px; color: #fff; padding: 0 4px 0 0; }
.opt.last { width: 110px; }
.opt .pick::after { align-self: center; margin-right: 9px; }
.wideopts .opt { width: 98px; }
.wideopts .color { width: 122px; }
.wideopts .first { width: 112px; }
.wideopts .last { width: 114px; }
.wideopts .fx { width: 52px; }
.singles { display: flex; gap: 14px; }
.singles .group { margin: 0; }
.singles .tb { width: 42px; }
.singles .wide { width: 56px; gap: 7px; }
.account { margin-left: auto; display: flex; gap: 34px; padding-right: 22px; color: #c5d3ea; }
.account svg { width: 29px; height: 28px; }

/* Work area */
.work { display: grid; grid-template-columns: minmax(0, 1fr) 726px; gap: 13px; padding: 11px 10px 0 12px; align-items: start; }
.editor { margin-top: 13px; display: flex; flex-direction: column; border-radius: 4px; overflow: hidden; }
.toolbar { display: flex; align-items: center; height: 59px; background: #0e1a2e; padding-left: 9px; border-bottom: 1px solid #03060b; }
.toolbar .group { margin-right: 14px; }
.toolbar .group:first-child { margin-right: 70px; }
.toolbar .far { margin-right: 46px; }
.action { width: 95px; gap: 5px; font-size: 13px; }
.winbtns { margin-left: auto; display: flex; gap: 14px; align-self: flex-start; padding: 9px 9px 0 0; font-size: 18px; color: #d6d9de; }
.trackrow { display: flex; height: 40px; }
.trackhead { width: 387px; flex: none; display: flex; align-items: center; background: #0c1420; padding: 0 8px; font-size: 14px; }
.menu { width: 21px; height: 16px; }
.swatch { width: 16px; height: 38px; background: #36f2ff; margin-left: 10px; }
.track { width: 212px; margin-right: auto; color: #e3e6ea; }
.ruler { flex: 1; min-width: 0; height: 40px; background: #1a2840; }
.noterow { display: flex; height: 746px; }
.inspector { width: 275px; flex: none; background: #1e252e; padding: 0 4px 0 3px; color: #b9c0c9; }
.row { display: flex; align-items: center; height: 34px; gap: 7px; padding-left: 3px; }
.row.first { height: 31px; }
.row.gap { margin-top: 15px; }
.inst { width: 13px; height: 11px; margin: 0 2px; }
.ms { width: 34px; font-size: 16px; }
.tick, .sq { width: 24px; height: 24px; background: #171a1f; border: 1px solid #10141a; border-radius: 2px; appearance: none; display: grid; place-items: center; flex: none; }
.tick:checked::before { content: ""; width: 14px; height: 13px; background: #fff; clip-path: polygon(0 50%, 15% 40%, 38% 70%, 85% 0, 100% 8%, 40% 100%); }
.num { width: 50px; height: 24px; background: #171a1f; border: 1px solid #10141a; text-align: center; font-size: 14px; }
.mini { width: 98px; height: 24px; }
.box { background: #171a1f; border: 1px solid #10141a; height: 24px; border-radius: 2px; }
.key { width: 55px; font-size: 14px; margin-left: -3px; margin-right: 3px; }
.key select { padding-right: 14px; }
.sq { background: #2a313c; font-size: 18px; }
.sq svg { width: 15px; height: 15px; }
.sq.blue { background: #1f5ba8; color: #fff; font-size: 14px; }
.chord { width: 116px; height: 22px; background: #252b35; }
.piano { width: 112px; height: 746px; }
.notes { flex: 1; min-width: 0; height: 746px; background: #232831; }
.vscroll { width: 21px; background: #0f1116; display: flex; flex-direction: column; align-items: center; justify-content: space-between; padding: 5px 0; }
.vscroll b { width: 7px; height: 410px; background: #55585e; margin-top: 78px; border-radius: 2px; }
.vscroll i { width: 11px; height: 8px; background: #55585e; }
.vscroll .up { clip-path: polygon(50% 0, 100% 100%, 0 100%); }
.vscroll .down { clip-path: polygon(0 0, 100% 0, 50% 100%); }
.lanerow { display: flex; height: 325px; }
.lane-left { width: 387px; background: #1e252e; padding-left: 275px; flex: none; display: flex; flex-direction: column; }
.lane-gap { height: 21px; }
.lane-scale { width: 112px; height: 282px; outline: 1px solid #0a0d12; }
.lane-tools { display: flex; align-items: center; gap: 13px; height: 22px; padding-left: 4px; font-size: 20px; color: #dfe2e6; }
.lane-tools svg { width: 17px; height: 15px; }
.lane { flex: 1; min-width: 0; display: flex; flex-direction: column; background: #0f1116; }
.tabs { display: flex; height: 21px; border: solid #05070a; border-width: 1px 0; color: #a3abb8; }
.tabs button { padding: 0 13px; background: #171a22; border-right: 1px solid #0b0d12; font-size: 13px; }
.tabs .kana { padding: 0 8px; font-size: 11px; }
.tabs .kanji { padding: 0 13px; font-size: 12px; }
.tabs .dots { padding: 0 4px 0 8px; font-weight: 700; }
.tabs .sel { background: #1f58a8; color: #fff; border-radius: 4px 4px 0 0; width: 71px; }
.tabs .x { margin-left: auto; background: none; border: 0; padding: 0 5px; }
.vel { width: 100%; height: 282px; background: #1b1e25; }
.hscroll { flex: 1; display: flex; align-items: center; gap: 20px; padding: 0 6px 0 8px; }
.hscroll i { width: 8px; height: 11px; background: #55585e; }
.left { clip-path: polygon(100% 0, 100% 100%, 0 50%); }
.right { clip-path: polygon(0 0, 100% 50%, 0 100%); }
.track-h { flex: 1; display: flex; }
.track-h b { width: 120px; height: 6px; margin-left: 64%; background: #55585e; border-radius: 2px; }
.hscroll svg { width: 16px; height: 16px; margin-left: -10px; }
.hscroll input { appearance: none; width: 114px; height: 12px; background: radial-gradient(circle at 109px 6px, #666 5px, transparent 5px), linear-gradient(#666, #666) center / 100% 3px no-repeat; }
.hscroll input::-webkit-slider-thumb { appearance: none; width: 6px; height: 13px; background: #777; border-radius: 2px; }

/* Browser */
.browser { background: #1a1c21; border-radius: 4px; overflow: hidden; display: flex; flex-direction: column; }
.btabs { display: flex; height: 38px; background: #1c1f25; padding: 0 4px 0 7px; color: #a9adb3; }
.btabs a { display: flex; align-items: center; padding: 0 7px; }
.btabs a:nth-child(n+3) { padding: 0 6px; }
.btabs a:first-child { padding: 0 8px 0 0; }
.btabs a svg { width: 15px; height: 16px; }
.btabs .cur { background: #2b3542; color: #e3e6ea; }
.btabs button { margin-left: auto; }
.btabs button svg { width: 17px; height: 17px; }
.subtabs { display: flex; gap: 15px; align-items: center; height: 26px; background: #2b3542; padding-left: 10px; color: #dde0e4; border-bottom: 1px solid #242c37; }
.subtabs .dim { color: #8b929c; font-size: 14px; }
.crumbs { display: flex; gap: 12px; align-items: center; height: 26px; background: #242a35; padding-left: 7px; color: #e3e6ea; }
.crumbs a:nth-of-type(2) { font-size: 14px; }
.crumbs i { color: #2b8de0; font-size: 11px; }
.desk { display: flex; align-items: center; gap: 6px; height: 31px; background: #1a1c21; padding: 0 4px 0 9px; color: #a9adb3; font-size: 12px; }
.desk svg { width: 22px; height: 20px; }
.upt { margin-left: auto; transform: rotate(180deg); }
.plugin { background: #040405; border: 1px solid #3a3a3c; padding-bottom: 2px; font-size: 12px; }
.ptitle { height: 23px; background: #111216; display: flex; align-items: center; gap: 15px; padding: 0 9px; font-size: 14px; color: #d6d9de; }
.ptitle b { font-size: 22px; width: 14px; }
.ptitle svg { width: 15px; height: 15px; }
.ptitle button { font-size: 16px; }
.pname { height: 33px; display: flex; align-items: center; gap: 12px; padding-left: 10px; font-size: 14px; color: #fff; }
.pbar { display: flex; height: 22px; gap: 1px; color: #aaa; }
.pbar > * { background: #17191c; height: 22px; }
.pbar svg { width: 17px; height: 15px; }
.pbar .pw { width: 31px; background: #1583d8; }
.pbar .by { width: 32px; color: #666; }
.pbar .c1 { width: 24px; margin-left: 5px; }
.pbar .c2 { width: 36px; font-size: 12px; }
.preset { width: 200px; }
.preset select { font-size: 12px; padding-right: 12px; }
.pbar .c3 { width: 44px; margin-left: 11px; }
.pbar .n { margin-left: 0; }
.two { height: 20px; margin-top: 1px; }
.two > * { height: 19px; }
.two .au { width: 64px; background: #20252b; color: #8b929c; font-size: 11px; }
.two .cmp { width: 87px; color: #4c5568; }
.two .au + .cmp { margin-left: 5px; }
.two .copy { width: 86px; color: #c3c8cf; }
.two .gr { width: 22px; margin-left: auto; }
.two .gr svg { width: 13px; height: 13px; }
.two > .tri { height: 7px; align-self: center; background: #555; margin: 0 6px 0 5px; }
.two .qw { width: 111px; background: #f7c30e; color: #222; font-size: 14px; }
.khead, .rack, .kkeys, .kfoot { margin: 4px 3px 0 2px; font-family: Roboto, "Liberation Sans", sans-serif; font-size: 10px; color: #b7b7b7; }
.khead { display: flex; height: 32px; background: linear-gradient(#5a5a5a, #474747); }
.logo { width: 20px; height: 20px; margin: 6px auto 0 7px; color: #c4c4c4; }
.khead button { width: 34px; border-left: 1px solid #2c2c2c; color: #d4d4d4; }
.khead button svg { width: 16px; height: 16px; }
.stats { background: #3c3c3c; width: 132px; display: grid; grid-template-columns: 68px 1fr; align-content: center; line-height: 11px; padding-left: 7px; color: #999; }
.stats em, .ibox em { color: #ccc; }
.bang { width: 22px; background: #3c3c3c; font-size: 20px; line-height: 32px; color: #888; }
.avail { width: 119px; display: flex; align-items: center; gap: 7px; padding-left: 8px; line-height: 11px; color: #999; border-left: 1px solid #333; }
.tg { width: 15px; height: 16px; color: #bbb; }
.nil { width: 27px; height: 19px; margin-left: 3px; }
.rack { margin-top: 2px; border: 4px solid #464646; background: #464646; height: 509px; padding-top: 4px; }
.multi { display: flex; height: 19px; align-items: center; gap: 6px; margin-bottom: 8px; }
.mr { width: 43px; line-height: 11px; }
.mname { flex: 1; height: 19px; background: #333; display: flex; align-items: center; gap: 10px; padding: 0 8px; font-size: 13px; color: #ccc; }
.mname .tri, .ibox .tri { width: 6px; height: 4px; }
.nav { font-size: 8px; color: #888; }
.pg { width: 34px; height: 19px; color: #aaa; }
.pg.cur { background: #2c2c2c; color: #eee; }
.kb { width: 21px; height: 18px; background: #555; font-size: 9px; color: #bbb; }
.rackbody { display: flex; background: #191919; height: 470px; }
.instrument { flex: 1; min-width: 0; height: 421px; background: #eeede3; padding: 7px 5px 0 9px; }
.rscroll { width: 7px; height: 457px; margin: 4px 3px 0 4px; background: #3a3a3a; border-radius: 4px; }
.ihead { display: flex; height: 57px; gap: 7px; }
.ileft { width: 35px; display: flex; flex-direction: column; gap: 2px; color: #333; }
.wr { height: 19px; border: 1px solid #777; border-radius: 2px; }
.wr svg { width: 24px; height: 14px; }
.new { height: 36px; border: 1px solid #999; border-radius: 2px; background: linear-gradient(#d8d8d3, #d8d8d3) bottom / 100% 12px no-repeat, repeating-linear-gradient(135deg, #aaa 0 1px, #d8d8d3 1px 3px); align-items: flex-end; padding-bottom: 1px; font-size: 11px; }
.ibox { flex: 1; display: grid; grid-template: 22px 17px 16px / 178px 1fr 61px; background: linear-gradient(#5c5b55, #4a4a4a 30%, #454545); border: 1px solid #111; border-radius: 2px; color: #eee; }
.ibox > div { display: flex; align-items: center; border-bottom: 1px solid #333; white-space: nowrap; gap: 4px; padding-left: 5px; min-width: 0; }
.ibox > .iname { grid-column: 1 / 3; font-size: 13px; gap: 8px; padding: 0 10px 0 9px; }
.ibox > .icam { border-left: 1px solid #333; justify-content: space-around; }
.icam svg { width: 15px; height: 14px; }
.icam b { width: 12px; height: 12px; border-radius: 6px; background: #fff; color: #222; text-align: center; line-height: 12px; }
.ic, .ip { border-left: 1px solid #333; }
.ic .tri, .ip .tri { margin: 0 8px 0 auto; }
.leds u { width: 13px; height: 5px; background: #777; }
.leds .hi { background: #eee; }
.ism { display: flex; flex-direction: column; gap: 7px; }
.ism button { width: 18px; height: 25px; background: #d2d1ca; border: 1px solid #888; color: #444; border-radius: 2px; }
.itune, .imeter { width: 87px; display: flex; flex-direction: column; gap: 3px; }
.pan { height: 16px; background: #3a3a3a; border: 1px solid #111; color: #eee; display: flex; justify-content: space-between; align-items: center; padding: 0 4px; font-size: 8px; }
.pan b { background: #666; padding: 0 2px; line-height: 14px; }
.vol svg { width: 56px; height: 12px; }
.meter { height: 36px; border: 2px solid #111; background: #111; display: grid; gap: 2px; margin-bottom: 2px; }
.meter i { background: #555; }
.iside { width: 13px; margin: -3px 0 0 -4px; display: flex; flex-direction: column; gap: 1px; }
.iside button { height: 13px; background: #74736d; color: #ddd; font-size: 7px; }
.iside .pv { background: #222; }
.ibody { display: flex; gap: 7px; margin-top: 15px; }
.routes { width: 85px; flex: none; }
.routes .pick, .opts button { height: 15px; width: 85px; background: linear-gradient(#5a5954, #454540); border: 1px solid #2a2a28; border-width: 0 1px 1px; color: #eee; border-radius: 2px; }
.routes .pick select { text-align: left; text-align-last: left; padding-left: 5px; height: 14px; }
.routes .pick::after { width: 6px; height: 4px; background: #eee; }
.opts { margin-top: 10px; }
.opts button { justify-content: flex-start; padding-left: 5px; }
.strips { display: grid; grid-template-columns: repeat(6, 86px); grid-template-rows: 150px auto; column-gap: 14px; }
.strip h3 { margin: 0 0 4px; height: 16px; background: #33332f; color: #eee; font: inherit; text-align: center; line-height: 16px; border-radius: 2px; }
.cell { display: grid; grid-template: 16px 16px / 33px 1fr; row-gap: 5px; height: 40px; align-content: start; color: #fff; line-height: 16px; }
.itune .cell { height: 37px; margin-top: -1px; }
.cell svg { width: 37px; height: 37px; grid-row: 1 / 3; }
.cell span { background: #8c8b84; padding: 0 4px 0 10px; clip-path: polygon(0 0, 100% 0, 100% 100%, 5px 100%); }
.cell span + span { background: #5d5c55; display: flex; justify-content: space-between; clip-path: polygon(5px 0, 100% 0, 100% 100%, 0 100%); white-space: nowrap; }
.cell small { font-size: 9px; }
.cell.dark span { background: #484848; }
.kkeys { display: flex; height: 71px; background: #474747; margin-top: 3px; gap: 2px; }
.oct { width: 33px; display: flex; flex-direction: column; align-items: center; justify-content: center; gap: 9px; line-height: 12px; color: #eee; padding-right: 4px; }
.oct i { width: 8px; height: 5px; background: #888; clip-path: polygon(50% 0, 100% 100%, 0 100%); }
.oct .dn { clip-path: polygon(0 0, 100% 0, 50% 100%); }
.whl { width: 14px; background: #262626; display: flex; align-items: flex-end; justify-content: center; padding-bottom: 4px; }
.whl b { width: 9px; height: 3px; background: #ddd; }
.whl .m { margin-bottom: 28px; }
#minikeys { width: 570px; height: 67px; margin: 4px 0 0 1px; background: #1b1b1b; }
.kfoot { height: 14px; background: #474747; margin-top: 3px; display: flex; justify-content: flex-end; padding: 3px 1px 0 0; }
.kfoot svg { width: 12px; height: 10px; }
.listwrap { display: flex; height: 183px; background: #191c20; }
.listwrap > .tri { align-self: flex-end; margin: 0 5px 6px 0; }
.folders { flex: 1; list-style: none; margin: 0; padding: 0 0 0 24px; overflow: hidden; font-size: 15px; color: #b9bec6; }
.folders li { display: flex; align-items: center; height: 27px; gap: 6px; }
.folders svg { width: 19px; height: 15px; margin-right: 1px; }
.info { display: flex; gap: 12px; background: #252933; height: 138px; padding: 21px 0 0 11px; }
.info svg { width: 40px; height: 31px; margin-top: 9px; }
.ititle { font-size: 19px; line-height: 24px; color: #dde0e4; }
.ipath { font-size: 14px; line-height: 18px; }

/* Transport */
.transport { display: flex; margin-top: 10px; height: 56px; background: #0e1a2e; justify-content: space-between; }
.deck { display: flex; width: 1805px; margin-left: 272px; background: #131313; clip-path: polygon(0 0, 100% 0, calc(100% - 16px) 100%, 12px 100%); border-bottom: 3px solid #1b2029; color: #9c9c9c; font-size: 13px; }
.col { display: flex; flex-direction: column; align-items: center; padding-top: 8px; flex: none; white-space: nowrap; }
.col > * { height: 21px; line-height: 20px; }
.l { align-items: flex-start; }
.r { align-items: flex-end; }
.v { font-size: 16px; color: #cfcfcf; }
.v.dim { color: #8d8d8d; }
.s { font-size: 14px; color: #c3c3c3; }
.unit { display: flex; align-items: center; gap: 7px; }
.c-midi { width: 69px; padding-left: 9px; }
.c-midi .midi { width: 34px; height: 21px; }
.c-perf { width: 81px; }
.bars { width: 81px; display: flex; flex-direction: column; gap: 2px; padding-top: 2px; }
.bars i { height: 7px; background: #303234; display: flex; }
.bars b { width: 42%; background: #55a8d6; }
.c-ring { width: 67px; padding: 11px 0 0 5px; }
.c-ring svg { height: 30px; }
.c-khz { width: 85px; }
.c-rec { width: 110px; }
.c-time { width: 94px; }
.c-time .unit { padding-right: 10px; }
.c-pos { width: 205px; padding-left: 38px; }
.pos { font-size: 24px; color: #d0d0d0; -webkit-text-stroke: 1px #d0d0d0; }
.buttons { display: flex; align-items: center; width: 395px; padding-left: 25px; gap: 16px; fill: #c6c6c6; }
.buttons svg { width: 12px; height: 15px; }
.buttons .b2 svg { width: 22px; }
.buttons .b0 { margin-left: -4px; }
.buttons .b1 { margin: 0 10px 0 4px; }
.buttons .bs svg { width: 25px; height: 26px; }
.buttons .bp svg { width: 22px; height: 26px; }
.buttons .bp { margin-left: 6px; }
.buttons .br { margin-left: 2px; }
.buttons .br svg { width: 26px; height: 26px; }
.buttons .bl { margin-left: 4px; }
.buttons .bl svg { width: 40px; height: 26px; }
.lr { width: 27px; align-items: flex-start; color: #3a7597; font-size: 16px; }
.lr, .c-loc { padding-top: 6px; }
.c-loc { width: 132px; }
.c-off { width: 49px; }
.c-ic { width: 76px; }
.c-ic div, .c-met div { display: flex; gap: 14px; align-items: center; }
.c-ic svg { width: 20px; height: 13px; }
.c-met { width: 76px; }
.c-met div { gap: 12px; }
.c-met svg { width: 13px; height: 13px; }
.rdot { width: 12px; height: 12px; border-radius: 6px; background: #777; }
.c-sig { width: 72px; }
.c-key { width: 46px; }
.c-bpm { width: 66px; }
.c-out { padding-left: 14px; gap: 10px; align-items: flex-start; }
.om { width: 112px; height: 11px; background: linear-gradient(#303234 5px, #121212 5px 6px, #303234 6px); }
.of { display: flex; gap: 8px; height: 12px; }
.of i { width: 84px; height: 12px; background: repeating-linear-gradient(90deg, #121212 0 1px, transparent 1px 3px), linear-gradient(90deg, #4a8cb4 75%, #333 75%); }
.of svg { width: 20px; height: 12px; }
.views { display: flex; color: #e3e6ea; }
.views button { width: 71px; font-size: 13px; background: #0a111d; }
.views .on { background: #1668d8; width: 68px; }
.views .on:last-child { width: 82px; }
```
FILE: app.js
```js
const NS = 'http://www.w3.org/2000/svg';
const $ = id => document.getElementById(id);
const rect = (x, y, w, h, fill, extra = '') =>
  `<rect x="${x}" y="${y}" width="${w}" height="${h}" fill="${fill}" ${extra}/>`;

const GRID = 1391;          // design width of the note grid
const LANE = 1412;          // design width of ruler and velocity lane
const FIRST_BAR_X = 61.5;   // bar 340
const BAR_W = 27.96;
const HEAD_X = 17;
const BLACK = [1, 3, 5, 8, 10];

// Notes per key row, counted from the top of the grid: [row, shade, part A, part B]
const TICKS = 2.178;
const PART_B = 1525;
const strip = (a, b, step) => { const r = []; for (let x = a; x <= b; x += step) r.push(x); return r; };
const lanes = [
  [3, 'a', [790], []],
  [7, 'a', [777], []],
  [14, 'a', [548, 1523], [986]],
  [16, 'a', [1018, 1438], []],
  [17, 'a', [1040, 1065, 1104, 1125, 1163, 1188, 1225, 1286, 1307, 1345, 1370, 1408, 1551], [28, 66, 88, 126, 151, 189, 249, 271, 309, 333]],
  [19, 'c', [1078, 1202, 1323, 1383, 1566], [164, 287]],
  [20, 'c', [1142], []],
  [23, 'a', [897], []],
  [26, 'a', [713], []],
  [29, 'a', [303, 425, 502], []],
  [32, 'a', [60, 180, 289, 484, 561, 668], []],
  [34, 'a', [], [333]],
  [35, 'a', [], [441, 919, 1443]],
  [36, 'c', [532], [409]],
  [36, 'b', strip(1018, 1490, 14.75).concat(strip(1522, 1842, 15.2)), []],
  [37, 'a', [44, 91, 104, 137, 167, 212, 226, 243, 257, 332, 347, 362, 378, 394, 409, 439, 456, 472, 577, 592, 608, 624, 654, 701, 820, 837, 853, 866], []],
  [39, 'a', [74, 120, 151, 197, 273, 320, 637, 684, 806, 883], []],
  [45, 'a', [1476], []],
  [46, 'a', [1487], []],
  [46, 'b', [], [796, 933, 948, 1093, 1155, 1283, 1376]],
  [47, 'a', [1498], [202, 390, 659, 681, 811, 902, 930, 938, 947, 957, 1100, 1112, 1122, 1160, 1300, 1384]],
  [48, 'b', [], [724, 738]],
  [51, 'b', [], [218, 398, 507, 567, 630, 752, 872, 963, 1033, 1170, 1181, 1193, 1236, 1405]],
  [52, 'b', [1460], [211, 516, 538, 554, 575, 635, 673, 690, 757, 783, 880, 970, 1002, 1040, 1062, 1177, 1223, 1245, 1268, 1414]],
  [53, 'b', [], [845, 858]],
  [55, 'a', [], [358]],
  [56, 'a', [516], [712]],
  [57, 'a', [], [1198, 1341, 1351, 1443]],
  [59, 'c', [1133, 1376], [97, 341]],
  [60, 'a', [523, 741, 748, 757, 768, 806, 926, 973, 993, 1000, 1011, 1049, 1072, 1111, 1170, 1193, 1231, 1294, 1316, 1354, 1414, 1438], [12, 37, 75, 134, 158, 194, 256, 278, 316, 379, 441, 529, 592, 652, 774, 834, 897, 1017, 1079, 1138, 1261, 1321]],
  [61, 'c', [175, 418, 663, 1027, 1057, 1148, 1180, 1249, 1258, 1301, 1392, 1421, 1528], [113, 142, 240, 265, 995]],
  [62, 'a', [74, 129, 197, 251, 320, 371, 439, 494, 561, 616, 684, 730, 737, 859, 912, 942, 959, 989, 1452], [369, 919]],
  [63, 'c', [53, 142, 159, 189, 203, 218, 266, 280, 295, 386, 400, 434, 630, 646, 676, 708, 783, 875, 891, 1087, 1209, 1249, 1268, 1332], [20, 50, 173, 233, 295, 1024]],
  [64, 'c', [98, 341, 456, 586, 828, 904, 919, 935, 951, 965, 981], [614]],
  [68, 'b', [44, 82, 104, 158, 205, 227, 276, 287, 327, 350, 403, 447, 472, 570, 592, 646, 692, 777, 812, 837, 886, 897, 911, 926, 942, 957, 973, 988, 1003, 1019, 1133, 1376, 1468], [97, 223, 341, 559, 698, 804, 820, 1046, 1154, 1161, 1168, 1176, 1184, 1196, 1291, 1307, 1425]],
  [69, 'b', [60, 91, 113, 168, 180, 213, 235, 303, 331, 358, 408, 425, 456, 480, 510, 548, 578, 600, 654, 668, 701, 713, 790, 820, 845, 1035, 1095, 1117, 1141, 1155, 1218, 1240, 1261, 1278, 1338, 1362, 1383, 1400, 1523], [58, 81, 103, 118, 180, 303, 325, 347, 409, 437, 499, 523, 545, 583, 621, 643, 668, 706, 744, 766, 788, 826, 864, 888, 910, 986, 1011, 1055, 1071, 1109, 1131, 1229, 1253, 1274, 1312, 1359, 1389, 1436]]
];
const shade = { a: '#05a2ac', b: '#087f88', c: '#144a53' };

// Velocity events: position, distance of the bar's top, for both halves of the lane
const velA = '288,168 295,816 302,298 316,246 323,582 331,141 337,612 344,224 352,508 359,246 367,332 374,194 382,896 388,224 396,500 403,171 409,860 416,298 424,642 431,201 439,508 447,138 454,868 460,224 468,508 475,222 482,332 488,194 496,896 503,224 512,500 519,356 526,830 532,228 548,252 556,568 560,153 569,644 575,222 583,447 589,177 597,314 604,147 613,912 620,186 626,538 632,266 641,830 648,228 656,651 661,132 669,558 677,177 692,222 698,490 705,372 713,417 720,186 728,396 734,318 741,290 749,900 765,276 777,178 784,568 792,201 799,590 806,198 813,464 821,207 829,320 837,186 843,884 849,231 857,508 865,156 871,866 879,327 886,630 893,258 901,500 909,178 914,512 921,269 937,276 945,327 949,312 956,342 965,312 973,327 981,194 988,816 994,231 1009,164 1016,582 1022,141 1030,614 1038,224 1046,508 1053,222 1059,246 1066,194 1074,896 1081,224 1089,500 1095,228 1102,702 1110,297 1116,656 1122,282 1130,642 1138,266 1146,656 1153,276 1161,642 1167,261 1175,680 1182,276 1188,362 1193,321 1198,476 1203,348 1211,375 1218,720 1225,418 1231,297 1238,300 1247,765 1255,300 1262,312 1268,506 1275,735 1282,418 1291,297 1298,312 1305,456 1311,318 1319,600 1326,418 1333,702 1339,432 1347,327 1355,288 1362,786 1370,268 1376,303 1384,536 1391,765 1399,426 1406,297 1411,314 1419,432 1427,486 1434,660 1440,418 1448,530 1456,411 1464,312 1471,300 1477,778 1484,252 1492,327 1500,530 1507,762 1512,447 1519,300 1528,290 1535,411 1543,288 1549,642 1555,423 1563,740';
const velB = '4,438 10,297 16,290 23,724 31,486 38,246 45,552 52,298 59,298 66,298 74,348 80,400 84,380 89,420 94,318 117,198 123,645 129,300 137,717 144,300 152,312 158,506 165,735 172,418 179,297 187,312 194,456 199,318 207,600 214,418 220,702 227,432 235,330 242,290 250,786 257,268 265,303 270,537 277,765 284,426 293,297 298,312 306,468 313,403 319,537 325,471 333,720 340,484 348,312 355,300 362,778 368,252 376,327 383,531 390,762 394,486 398,447 404,298 410,291 418,411 425,164 432,642 438,366 448,297 458,318 468,192 478,387 487,387 496,348 520,333 526,298 579,479 586,702 594,432 600,462 606,393 614,837 621,432 628,456 635,658 641,687 649,357 656,462 665,396 685,327 692,468 699,606 705,417 712,483 720,396 728,552 735,423 740,378 747,664 755,411 762,606 769,441 775,359 790,569 797,569 805,426 811,672 817,402 825,464 832,393 839,815 845,447 852,500 860,680 867,479 874,603 881,546 888,396 903,509 911,359 917,449 923,636 931,423 938,454 946,404 952,500 958,454 966,486 981,776 986,717 992,524 996,393 1001,252 1007,462 1013,252 1028,462 1036,659 1043,432 1050,462 1056,394 1063,648 1071,612 1078,456 1085,537 1092,433 1099,357 1107,462 1114,396 1127,612 1134,456 1141,500 1147,462 1154,411 1162,483 1169,396 1184,612 1190,591 1197,612 1204,591 1211,540 1220,531 1225,588 1247,420 1252,426 1259,672 1267,402 1275,464 1283,393 1290,815 1295,447 1302,516 1311,680 1318,494 1325,603 1330,546 1338,291 1360,590 1366,447 1373,447 1388,492 1395,378 1401,402 1414,561 1423,177 1433,464 1443,378 1450,387';

function gridLines(k, h, end) {
  let s = '';
  for (let bar = 338; bar <= end; bar += 2) {
    const x = Math.round((FIRST_BAR_X + (bar - 340) * BAR_W) * k);
    s += rect(x - 1, 0, 2, h, '#9aa2b0', `opacity="${bar % 4 ? 0.14 : 0.28}"`);
  }
  return s;
}

function drawRuler() {
  const el = $('ruler'), k = el.clientWidth / LANE;
  let s = rect(0, 0, '100%', 7, '#243a57') + rect(0, 38, '100%', 2, '#0b0e14');
  for (let bar = 338; bar <= 386; bar += 2) {
    const x = Math.round((FIRST_BAR_X + (bar - 340) * BAR_W) * k), major = bar % 4 === 0;
    s += rect(x - 1, major ? 28 : 34, 2, major ? 10 : 4, '#e0e4ea');
  }
  const m = (FIRST_BAR_X + 24 * BAR_W) * k;
  s += `<path d="M${m - 12} 6h23l-11 13z" fill="#5b6b80"/>`;
  for (let bar = 340; bar <= 384; bar += 4) {
    const x = Math.round((FIRST_BAR_X + (bar - 340) * BAR_W) * k);
    s += `<text x="${x}" y="23" font-size="14" fill="#d3d8e0">${bar}</text>`;
  }
  el.innerHTML = s + rect(HEAD_X * k, 0, 1, 40, '#fff');
}

function drawNotes() {
  const el = $('notes'), k = el.clientWidth / GRID;
  let s = '';
  for (let o = -18; o < 746; o += 120) {
    BLACK.forEach(r => { s += rect(0, o + r * 10, '100%', 10, '#1a1f26'); });
    s += rect(0, o + 69, '100%', 1, '#14181e') + rect(0, o + 119, '100%', 1, '#363c46');
  }
  s += gridLines(k, 746, 386);
  lanes.forEach(([row, tone, a, b]) => {
    a.concat(b.map(x => x + PART_B)).forEach(t => {
      const x = Math.round((t / TICKS + 1) * k - 3);
      s += rect(x - 0.5, row * 10 + 2.5, 6, 9, shade[tone], 'stroke="#22c4cd"');
    });
  });
  el.innerHTML = s + rect(HEAD_X * k, 0, 1, 746, '#fff');
}

function drawPiano() {
  let s = '<defs><linearGradient id="ivory"><stop offset="0" stop-color="#999"/><stop offset=".18" stop-color="#eee"/><stop offset="1" stop-color="#f4f4f6"/></linearGradient></defs>' +
    rect(0, 0, 111, 746, 'url(#ivory)');
  for (let o = -18, n = 5; o < 746; o += 120, n--) {
    [17, 35, 52, 70, 86, 103, 119].forEach(y => { s += rect(0, o + y, 111, 1, '#999'); });
    BLACK.forEach(r => {
      s += rect(0, o + r * 10, 72, 10, '#17181a') + rect(2, o + r * 10 + 3, 62, 3, '#333436') + rect(66, o + r * 10 + 3, 4, 4, '#3c3d40');
    });
    if (n >= 0) s += `<text x="110" y="${o + 116}" font-size="10" text-anchor="end" fill="#222">C ${n}</text>`;
  }
  $('piano').innerHTML = s;
}

function drawVelocity() {
  const el = $('velocity'), k = el.clientWidth / LANE;
  let s = gridLines(k, 282, 388);
  const half = (data, origin, scale) => data.split(' ').forEach(p => {
    const [t, v] = p.split(',').map(Number);
    const x = Math.round((origin + t / scale) * k) - 2, y = Math.round(v / 3) - 44;
    s += rect(x, y, 5, 282 - y, '#069aa5') + rect(x + 1, y, 3, 282 - y, '#00c2d0');
  });
  half(velA, -119, 2.063);
  half(velB, 641, 2.01);
  el.innerHTML = s + rect(HEAD_X * k, 0, 1, 282, '#fff');
}

function drawScale() {
  let s = '';
  for (let y = 5; y < 280; y += 5) s += rect(106, y, 4, 1, '#aab');
  [['127', 12], ['64', 145], ['0', 280]].forEach(([t, y]) => {
    s += `<text x="100" y="${y}" font-size="11" text-anchor="end" fill="#a9aeb6">${t}</text>`;
  });
  $('lanescale').innerHTML = s + rect(104, 139, 6, 1, '#ccd');
}

function knob(angle) {
  return `<svg viewBox="0 0 37 37"><circle cx="18.5" cy="18.5" r="18" fill="#262624"/><circle cx="18.5" cy="18.5" r="14" fill="#454542"/>
    <g transform="rotate(${angle} 18.5 18.5)"><circle cx="18.5" cy="5" r="3.5" fill="#ccc" opacity=".75"/></g>
    <circle cx="18.5" cy="18.5" r="10.5" fill="#c9c9c6"/><circle cx="18.5" cy="18" r="8.5" fill="#f5f5f3"/>
    <g transform="rotate(${angle} 18.5 18.5)"><path d="M18.5 11v5" stroke="#555" stroke-width="2"/></g></svg>`;
}
const cell = (name, value, unit, angle) =>
  `<div class="cell">${knob(angle)}<span>${name}</span><span>${value}<small>${unit}</small></span></div>`;

function drawInstrument() {
  const routes = ['Kick_In', 'Kick_Out', 'Sub_Kick', 'Snare_T', 'Snare_B', 'Tom1', 'Tom2', 'HiHat', 'Ride', 'Splash', 'Top_HH', 'Top_Ride', 'Room_HH', 'Room_Ride', 'None', 'None', 'None', 'None'];
  $('routes').innerHTML = routes.map((r, i) => `<span class="pick"><select aria-label="Output ${i + 1}"><option>${r}</option></select></span>`).join('');
  const strips = ['22" Kick', '14" Snare', '13" Tom', '16" FloorTom', '', 'Room Transient', '14" HiHat', '20" Ride', '16" L Crash', '18" R Crash', '18" R Trashy', '10" Splash'];
  $('strips').innerHTML = strips.map((name, i) => {
    if (!name) return '<div></div>';
    let c;
    if (name === 'Room Transient') c = cell('Attack', '100.0', 'ms', 135) + cell('Sustain', '0.00', '%', 225);
    else {
      c = cell('Volume', '0.0', 'dB', 0) + cell('Tune', '0.00', '', 0) + (i === 1 ? cell('Release', '1.3k', 'ms', -30) : cell('Release', '25.0k', 'ms', 135));
      if (i > 5) c += cell('Swell', '100.0', 'ms', 135);
    }
    return `<div class="strip"><h3>${name}</h3>${c}</div>`;
  }).join('');
  $('tune').innerHTML = knob(0) + '<span>Tune</span><span>0.00<small>St</small></span>';
}

function drawMiniKeys() {
  const W = 11.26;
  let s = '';
  for (let i = 0; i < 50; i++) {
    const idle = i < 6 || i === 8 || i === 49;
    s += rect(3 + i * W, 4, W - 1, 58, idle ? '#c9c9c9' : '#7cc4d4');
  }
  s += rect(69, 0, 486, 3, '#3fa0b8');
  const idleBlack = [0, 1, 2, 3, 11, 13];
  let n = 0;
  for (let i = 0; i < 49; i++) {
    if (i % 7 === 2 || i % 7 === 6) continue;
    const shift = [-2, 0, 0, -3, -1, 1][i % 7];
    s += rect(Math.round(3 + (i + 1) * W) - 4 + shift, 3, 7, 38, idleBlack.includes(n) ? '#2a2a2a' : '#1d6274', 'stroke="#12303a"');
    n++;
  }
  $('minikeys').innerHTML = s;
}

function drawTimeline() { drawRuler(); drawNotes(); drawVelocity(); }
drawPiano(); drawScale(); drawInstrument(); drawMiniKeys(); drawTimeline();
window.addEventListener('resize', drawTimeline);
```
